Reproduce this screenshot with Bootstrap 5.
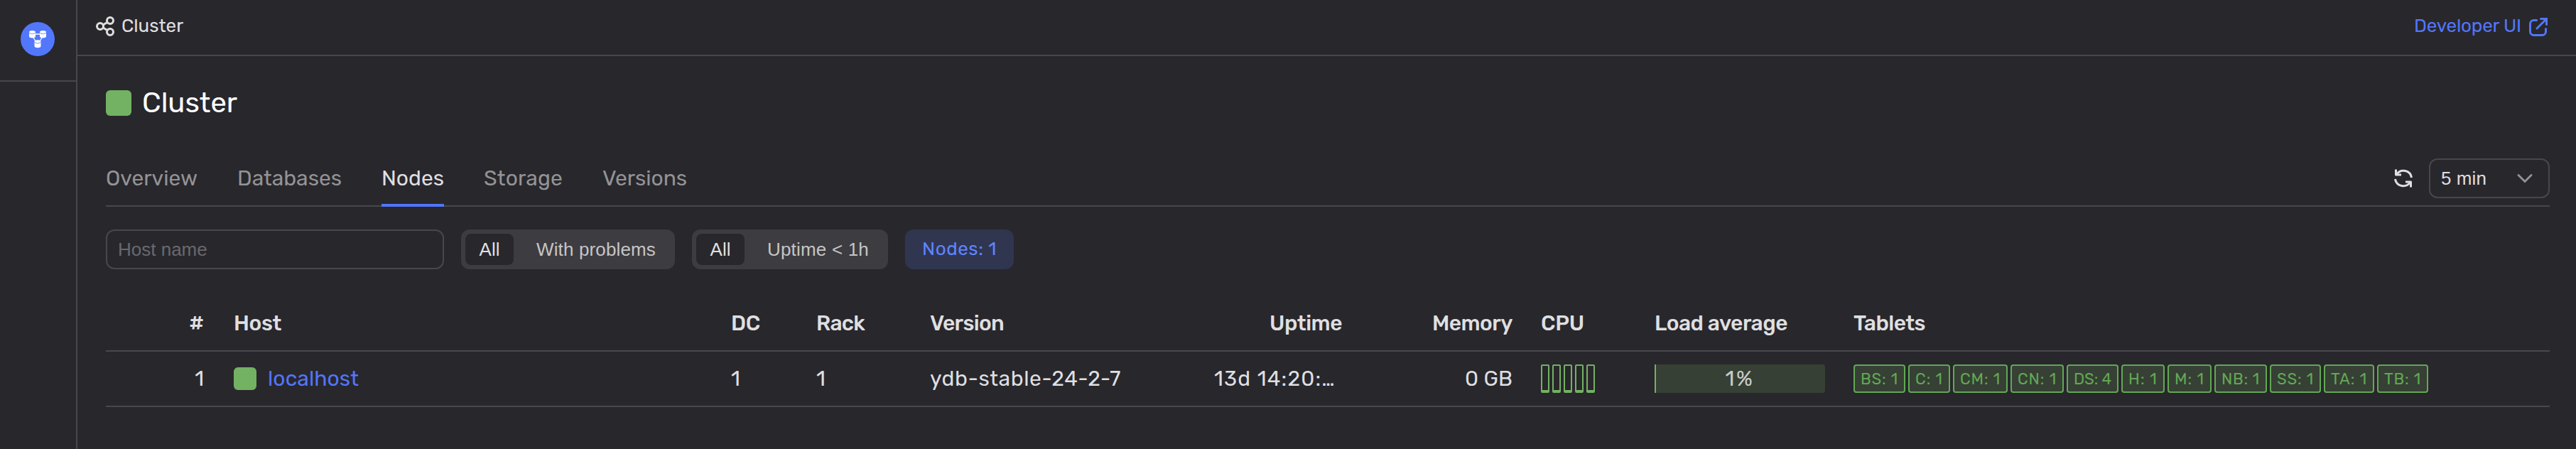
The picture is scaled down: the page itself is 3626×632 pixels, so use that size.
<!DOCTYPE html>
<html lang="en" data-bs-theme="dark">
<head>
<meta charset="utf-8">
<title>Cluster</title>
<link rel="stylesheet" href="https://cdn.jsdelivr.net/npm/bootstrap@5.3.0/dist/css/bootstrap.min.css">
<style>
:root{--line:#48474b;--ink:#dfdfe0;--dim:#939395;--green:#73b163;--blue:#5276fb}
body{background:#28272c;color:var(--ink);font-family:Rubik,Roboto,sans-serif;font-size:30px;line-height:40px;height:632px;overflow:hidden}
.helv{font-family:"Liberation Sans",sans-serif;font-size:26px;line-height:36px}
.t{display:inline-block;white-space:nowrap}
.side{width:109px;border-right:2px solid var(--line)}
.side-top{height:115px;border-bottom:2px solid var(--line);padding:31px 0 0 29px}
.topbar{height:79px;border-bottom:2px solid var(--line);padding:0 39px 0 25px;font-size:26px}
.topbar svg{display:block}
.body-pad{padding:0 37px 0 40px}
.title-row{height:132px;padding-top:0}
.title-row h1{font-size:40px;line-height:48px;font-weight:400}
.sq{background:var(--green);border-radius:6px;width:36px;height:36px}
.tabs{height:80px;border-bottom:2px solid var(--line)}
.tabs .nav{gap:56px}
.tabs .nav-link{padding:0;height:80px;line-height:80px;color:var(--dim);border-bottom:4px solid transparent;white-space:nowrap}
.tabs .nav-link.active{color:var(--ink);border-color:var(--blue)}
.sel{width:170px;height:56px;border:2px solid var(--line);border-radius:12px;padding:0 22px 0 15px}
.filters{gap:24px;margin-top:32px}
.filters input{width:476px;height:56px;border:2px solid var(--line);border-radius:12px;padding:0 15px;background:transparent}
.filters input::placeholder{color:#69696c;opacity:1}
.seg{height:56px;background:#3d3c41;border-radius:12px;padding:6px;color:#c5c5c6}
.seg .on{width:68px;height:44px;background:#28272c;border-radius:8px;color:var(--ink)}
.chip{width:153px;height:56px;border-radius:12px;background:#303650;color:#5f84ff;font-size:26px}
.grid-table{table-layout:fixed;width:3440px;margin:26px 0 0;border-collapse:separate;border-spacing:0}
.grid-table th,.grid-table td{padding:0 20px;border-bottom:2px solid var(--line);white-space:nowrap;overflow:hidden;vertical-align:middle}
.grid-table th{height:90px;font-weight:500;padding-top:11px}
.grid-table td{height:78px}
.grid-table th:first-child,.grid-table td:first-child{padding-right:22px}
.core{width:12px;height:40px;border:2px solid var(--green);border-bottom-width:4px;border-radius:2px}
.load{width:240px;height:40px;background:#364034;border-radius:4px;color:#c9cbc9}
.load i{width:2px;background:var(--green);left:0;top:0;bottom:0}
.tab-let{height:40px;border:2px solid #62a855;border-radius:4px;background:#364034;color:#62a855;font-size:22px;padding-top:2px}
</style>
</head>
<body>
<div class="d-flex h-100">
<aside class="side flex-shrink-0"><div class="side-top">
<svg class="d-block" width="48" height="48" viewBox="0 0 48 48"><circle cx="24" cy="24" r="24" fill="#5277fb"/><g stroke="#fff" stroke-width="1.3" fill="none"><path d="M18 17H30M17 20L22 29M31 20L26 29"/></g><g fill="#fff"><path d="M12 14.200c0-3 9-3 9 0v6c0 3-9 3-9 0zM27 14.200c0-3 9-3 9 0v6c0 3-9 3-9 0zM19.500 27.500c0-3 9-3 9 0v6.500c0 3-9 3-9 0z"/></g><g fill="none" stroke="#5277fb" stroke-width=".8"><path d="M12 15.500q4.500 2.500 9 0M27 15.500q4.500 2.500 9 0M19.500 28.800q4.500 2.500 9 0"/></g></svg>
</div></aside>
<main class="flex-grow-1">
<header class="topbar d-flex justify-content-between">
<div class="d-flex" style="padding-top:17px"><svg width="28" height="30" viewBox="0 0 28 30" fill="none" stroke="#dfdfe0" stroke-width="3" style="margin:5px 9px 0 0"><circle cx="7" cy="15" r="4.500"/><circle cx="21" cy="7" r="4.500"/><circle cx="21" cy="23" r="4.500"/><path d="M11 13L17 9.500M11 17L17 20.500"/></svg><span class="t" data-w="87">Cluster</span></div>
<a class="d-flex text-decoration-none" style="color:var(--blue);padding-top:17px" href="#"><span class="t" data-w="151">Developer UI</span><svg width="28" height="28" viewBox="0 0 28 28" fill="none" stroke="#5276fb" stroke-width="3" stroke-linecap="round" style="margin:7px 1px 0 9px"><path d="M12.500 4.500H8.500a5 5 0 0 0-5 5V20.500a5 5 0 0 0 5 5h12a5 5 0 0 0 5-5V16.500M13 16L26 3M18.500 2.500H26.500V10.500"/></svg></a>
</header>
<div class="body-pad">
<div class="title-row d-flex"><div class="sq" style="margin:48px 15px 0 0"></div><h1 class="m-0" style="padding-top:42px"><span class="t" data-w="134">Cluster</span></h1></div>
<div class="tabs d-flex justify-content-between">
<nav class="nav flex-nowrap"><a class="nav-link"><span class="t" data-w="129">Overview</span></a><a class="nav-link"><span class="t" data-w="147">Databases</span></a><a class="nav-link active"><span class="t" data-w="88">Nodes</span></a><a class="nav-link"><span class="t" data-w="111">Storage</span></a><a class="nav-link"><span class="t" data-w="119">Versions</span></a></nav>
<div class="d-flex" style="padding-top:12px"><svg width="28" height="28" viewBox="0 0 28 28" fill="none" stroke="#dfdfe0" stroke-width="3" style="margin:14px 22px 0 0"><path d="M25.500 13A11.500 11.500 0 0 0 4.500 8.500M2.500 15A11.500 11.500 0 0 0 23.500 19.500"/><path d="M3.500 1.500V9H11M24.500 26.500V19H17" stroke-linejoin="round"/></svg>
<div class="sel helv d-flex align-items-center justify-content-between"><span class="t" data-w="64">5 min</span><svg width="22" height="14" viewBox="0 0 22 14" fill="none" stroke="#939395" stroke-width="2.800" stroke-linecap="round"><path d="M2 2.500L11 11.500L20 2.500"/></svg></div></div>
</div>
<div class="filters d-flex">
<input class="helv" placeholder="Host name">
<div class="seg helv d-flex align-items-center" style="width:301px"><div class="on d-flex align-items-center justify-content-center"><span>All</span></div><span class="t" data-w="168" style="margin-left:32px">With problems</span></div>
<div class="seg helv d-flex align-items-center" style="width:276px"><div class="on d-flex align-items-center justify-content-center"><span>All</span></div><span class="t" data-w="143" style="margin-left:32px">Uptime &lt; 1h</span></div>
<div class="chip d-flex align-items-center justify-content-center"><span class="t" data-w="105">Nodes: 1</span></div>
</div>
<table class="grid-table">
<colgroup><col style="width:160px"><col style="width:700px"><col style="width:120px"><col style="width:160px"><col style="width:400px"><col style="width:220px"><col style="width:240px"><col style="width:160px"><col style="width:280px"><col style="width:1000px"></colgroup>
<thead><tr><th class="text-end">#</th><th><span class="t" data-w="67">Host</span></th><th><span class="t" data-w="41">DC</span></th><th><span class="t" data-w="68">Rack</span></th><th><span class="t" data-w="104">Version</span></th><th class="text-end"><span class="t" data-w="102">Uptime</span></th><th class="text-end"><span class="t" data-w="113">Memory</span></th><th><span class="t" data-w="61">CPU</span></th><th><span class="t" data-w="187">Load average</span></th><th><span class="t" data-w="101">Tablets</span></th></tr></thead>
<tbody><tr><td class="text-end">1</td><td><div class="d-flex align-items-center"><div class="sq" style="width:32px;height:32px;margin-right:16px"></div><a class="text-decoration-none" style="color:var(--blue)" href="#"><span class="t" data-w="128">localhost</span></a></div></td><td>1</td><td>1</td><td><span class="t" data-w="269">ydb-stable-24-2-7</span></td><td><span class="t" data-w="171">13d 14:20:…</span></td><td class="text-end"><span class="t" data-w="67">0 GB</span></td>
<td><div class="d-flex gap-1"><div class="core"></div><div class="core"></div><div class="core"></div><div class="core"></div><div class="core"></div></div></td>
<td><div class="load position-relative text-center"><i class="position-absolute"></i><span class="t" data-w="41">1%</span></div></td>
<td><div class="d-flex gap-1" id="tablets"></div></td></tr></tbody>
</table>
</div>
</main>
</div>
<script src="https://cdn.jsdelivr.net/npm/bootstrap@5.3.0/dist/js/bootstrap.bundle.min.js"></script>
<script>
// Tablet badges: label, badge width
[["BS: 1",73],["C: 1",59],["CM: 1",77],["CN: 1",75],["DS: 4",73],["H: 1",61],["M: 1",62],["NB: 1",74],["SS: 1",72],["TA: 1",71],["TB: 1",72]].forEach(function(d){
  var b=document.createElement("div");
  b.className="tab-let d-flex align-items-center justify-content-center flex-shrink-0";
  b.style.width=d[1]+"px";
  b.innerHTML='<span class="t" data-w="'+(d[1]-20)+'">'+d[0]+"</span>";
  document.getElementById("tablets").appendChild(b);
});
document.querySelectorAll(".t[data-w]").forEach(function(e){
  var w=e.getBoundingClientRect().width,n=e.textContent.length;
  e.style.letterSpacing=((e.dataset.w-w)/n)+"px";
});
</script>
</body>
</html>
